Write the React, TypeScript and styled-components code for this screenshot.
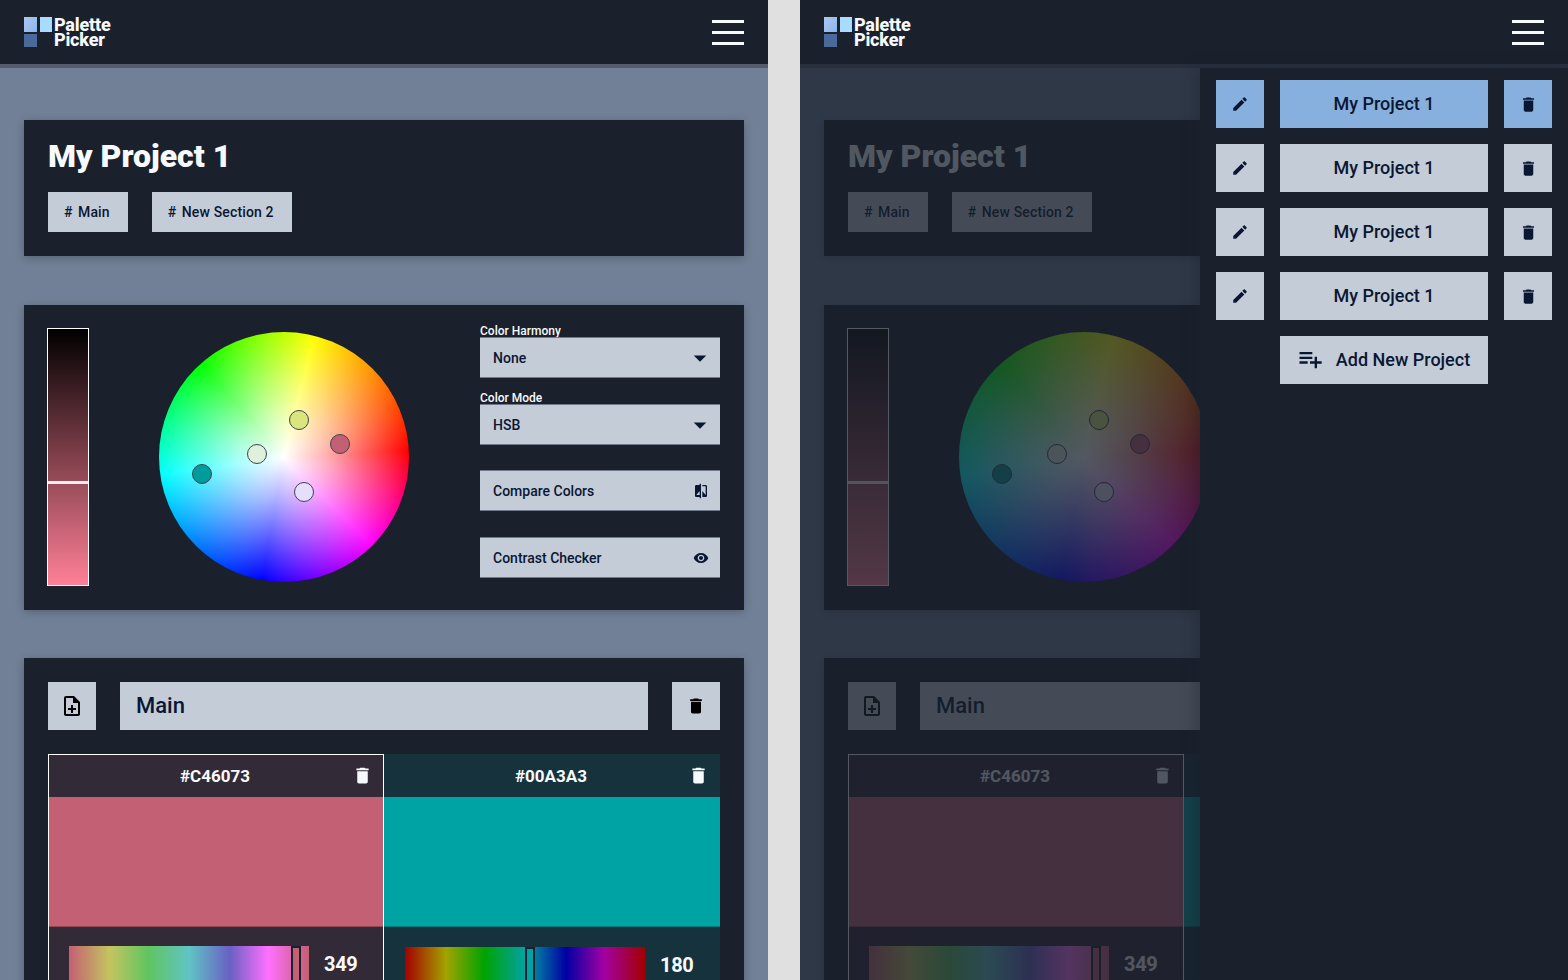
import React from 'react';
import styled, { createGlobalStyle } from 'styled-components';
import {
  MdArrowDropDown,
  MdCompare,
  MdDelete,
  MdEdit,
  MdOutlineNoteAdd,
  MdPlaylistAdd,
  MdVisibility,
} from 'react-icons/md';

const ink = '#0a1733';
const light = '#c4ccd8';
const dark = '#1a202c';
const active = '#88b0de';

const GlobalStyle = createGlobalStyle`
  html, body {
    margin: 0;
    height: 980px;
    overflow: hidden;
    background: #e0e0e0;
    font-family: Roboto, "Liberation Sans", sans-serif;
  }
  * { box-sizing: border-box; }
`;

const Page = styled.div`
  display: flex;
  justify-content: space-between;
  width: 1568px;
  height: 980px;
`;

const Screen = styled.div`
  position: relative;
  width: 768px;
  height: 980px;
  overflow: hidden;
  background: #718096;
`;

const Header = styled.header<{ $open: boolean }>`
  display: flex;
  align-items: center;
  justify-content: space-between;
  height: 68px;
  padding: 0 24px;
  background: ${dark};
  border-bottom: 4px solid ${(p) => (p.$open ? '#282f3d' : '#525c6c')};
`;

const Logo = styled.div`
  display: flex;
  align-items: center;
  gap: 2px;
  height: 32px;
`;

const LogoText = styled.div`
  color: #f7fafc;
  font-size: 18px;
  font-weight: 800;
  line-height: 15px;
  letter-spacing: -0.2px;
`;

const Burger = styled.div`
  display: flex;
  flex-direction: column;
  justify-content: space-between;
  width: 32px;
  height: 25px;
`;

const BurgerLine = styled.span`
  display: block;
  height: 3px;
  background: #f7fafc;
`;

const Main = styled.main`
  display: flex;
  flex-direction: column;
  padding: 52px 24px 0;
`;

const Card = styled.section<{ $height?: number; $gap?: number }>`
  ${(p) => (p.$height ? `height: ${p.$height}px;` : '')}
  margin-bottom: ${(p) => p.$gap ?? 0}px;
  padding: 24px;
  background: ${dark};
  box-shadow: 0 2px 8px rgba(26, 32, 44, 0.3);
`;

const Title = styled.h1`
  margin: -7px 0 0;
  color: #f7fafc;
  font-size: 32px;
  font-weight: 900;
  line-height: 38px;
`;

const Tabs = styled.div`
  display: flex;
  gap: 24px;
  margin-top: 17px;
`;

const Tab = styled.button`
  display: flex;
  align-items: center;
  height: 40px;
  padding: 0 18px 0 16px;
  border: 0;
  background: ${light};
  color: ${ink};
  font: 500 14px Roboto, sans-serif;
  letter-spacing: 0.15px;
`;

const Hash = styled.span`
  width: 14px;
  font-size: 14px;
  text-align: left;
`;

const PickerRow = styled.div`
  display: flex;
  align-items: flex-start;
`;

const Shade = styled.div`
  position: relative;
  flex: none;
  width: 42px;
  height: 258px;
  margin: -1px 0 0 -1px;
  border: 1px solid #fff;
  background: linear-gradient(#000, #ff8096);
`;

const ShadeThumb = styled.div`
  position: absolute;
  top: 152px;
  left: 0;
  right: 0;
  height: 3px;
  background: #eee;
`;

const Wheel = styled.div`
  position: relative;
  flex: none;
  width: 250px;
  height: 250px;
  margin: 3px 0 0 70px;
  border-radius: 50%;
  background:
    radial-gradient(closest-side, #fff 0%, rgba(255, 255, 255, 0.68) 35%, rgba(255, 255, 255, 0) 100%),
    conic-gradient(
      from 14deg,
      #ff0 0deg,
      #f00 73deg,
      #f0f 121deg,
      #00f 176deg,
      #0ff 248deg,
      #0f0 304deg,
      #ff0 360deg
    );
`;

const Handle = styled.div<{ $x: number; $y: number; $color: string }>`
  position: absolute;
  left: ${(p) => p.$x - 10}px;
  top: ${(p) => p.$y - 10}px;
  width: 20px;
  height: 20px;
  border-radius: 50%;
  border: 1px solid #3c4450;
  background: ${(p) => p.$color};
`;

const Controls = styled.div`
  display: flex;
  flex-direction: column;
  width: 240px;
  margin: -6px 0 0 auto;
`;

const FieldLabel = styled.label<{ $top?: number }>`
  height: 14px;
  margin-top: ${(p) => p.$top ?? 0}px;
  color: #f7fafc;
  font-size: 12px;
  font-weight: 500;
  line-height: 16px;
`;

const ControlBox = styled.div<{ $top?: number }>`
  display: flex;
  align-items: center;
  justify-content: space-between;
  height: 41px;
  margin-top: ${(p) => p.$top ?? 0}px;
  padding: 1px 11px 0 13px;
  border-top: 1px solid #6f7989;
  border-bottom: 1px solid #6f7989;
  background: ${light};
  color: ${ink};
  font-size: 14px;
  font-weight: 500;
`;

const DropIcon = styled(MdArrowDropDown)`
  margin-right: -6px;
`;

const SectionBar = styled.div`
  display: flex;
  gap: 24px;
  height: 48px;
`;

const IconButton = styled.button<{ $active?: boolean }>`
  display: flex;
  align-items: center;
  justify-content: center;
  flex: none;
  width: 48px;
  height: 48px;
  padding: 0;
  border: 0;
  background: ${(p) => (p.$active ? active : light)};
  color: ${ink};
`;

const SectionName = styled.div`
  display: flex;
  align-items: center;
  flex: 1;
  padding: 0 0 2px 16px;
  background: ${light};
  color: ${ink};
  font-size: 22px;
  font-weight: 500;
`;

const Swatches = styled.div`
  display: grid;
  grid-template-columns: 336px 336px;
  margin-top: 24px;
`;

const Swatch = styled.div<{ $selected?: boolean; $tint: string }>`
  position: relative;
  height: 300px;
  background: ${(p) => p.$tint};
  &::after {
    content: '';
    position: absolute;
    inset: 0;
    border: ${(p) => (p.$selected ? '1px solid #fff' : '0')};
    pointer-events: none;
  }
`;

const SwatchHead = styled.div`
  position: relative;
  display: flex;
  align-items: center;
  justify-content: center;
  height: 43px;
  padding: 1px 2px 0 0;
  color: #f7fafc;
  font-size: 17px;
  font-weight: 700;
`;

const SwatchTrash = styled(MdDelete)`
  position: absolute;
  right: 11px;
  top: 11px;
  color: #f7fafc;
`;

const SwatchColor = styled.div<{ $color: string }>`
  height: 130px;
  background: ${(p) => p.$color};
  border-bottom: 1px solid rgba(0, 0, 0, 0.25);
`;

const SwatchFoot = styled.div<{ $top: number }>`
  display: flex;
  gap: 15px;
  padding: ${(p) => p.$top}px 0 0 21px;
`;

const Hue = styled.div<{ $gradient: string }>`
  position: relative;
  width: 240px;
  height: 40px;
  background: ${(p) => p.$gradient};
`;

const HueThumb = styled.div<{ $x: number; $color: string }>`
  position: absolute;
  left: ${(p) => p.$x}px;
  top: 0;
  width: 10px;
  height: 40px;
  border: 2px solid ${dark};
  background: ${(p) => p.$color};
`;

const HueValue = styled.div`
  color: #f7fafc;
  font-size: 20px;
  font-weight: 700;
  line-height: 36px;
  letter-spacing: -0.3px;
`;

const Dim = styled.div`
  position: absolute;
  inset: 68px 0 0 0;
  background: rgba(26, 32, 44, 0.75);
`;

const Drawer = styled.aside`
  position: absolute;
  top: 68px;
  right: 0;
  bottom: 0;
  display: flex;
  flex-direction: column;
  gap: 16px;
  width: 368px;
  padding: 12px 16px;
  background: ${dark};
  box-shadow: -4px 0 14px rgba(26, 32, 44, 0.35);
`;

const ProjectRow = styled.div`
  display: flex;
  gap: 16px;
`;

const ProjectName = styled.button<{ $active?: boolean }>`
  display: flex;
  align-items: center;
  justify-content: center;
  gap: 12px;
  width: 208px;
  height: 48px;
  padding: 0 0 2px;
  border: 0;
  background: ${(p) => (p.$active ? active : light)};
  color: ${ink};
  font: 500 18px Roboto, sans-serif;
`;

const AddProject = styled(ProjectName)`
  margin-left: 64px;
  padding-right: 2px;
`;

const LogoMark = () => (
  <svg width="28" height="30" viewBox="0 0 28 30">
    <defs>
      <linearGradient id="logo-a" x1="0" y1="0" x2="1" y2="1">
        <stop offset="0" stopColor="#a9c9f5" />
        <stop offset="1" stopColor="#8fb4ea" />
      </linearGradient>
    </defs>
    <rect x="0" y="0" width="13" height="15" fill="url(#logo-a)" />
    <rect x="16" y="0" width="12" height="15" fill="#a8dcff" />
    <rect x="0" y="17" width="13" height="13" fill="#4a6a9c" />
  </svg>
);

const handles = [
  { x: 140, y: 88, color: '#dbe57e' },
  { x: 181, y: 112, color: '#c46073' },
  { x: 98, y: 122, color: '#dff0dd' },
  { x: 43, y: 142, color: '#009c9c' },
  { x: 145, y: 160, color: '#e5dffb' },
];

const pastelHue =
  'linear-gradient(90deg, #c46073 0%, #c4c460 17%, #60c460 33%, #60c4c4 50%, #6a60c4 67%, #ff70ff 83%, #c46073 100%)';
const tealHue =
  'linear-gradient(90deg, #a30000 0%, #a3a300 17%, #00a300 33%, #00a3a3 50%, #0000a3 67%, #a300a3 83%, #a30000 100%)';

const AppScreen = ({ open }: { open?: boolean }) => (
  <Screen>
    <Header $open={!!open}>
      <Logo>
        <LogoMark />
        <LogoText>
          Palette
          <br />
          Picker
        </LogoText>
      </Logo>
      <Burger>
        <BurgerLine />
        <BurgerLine />
        <BurgerLine />
      </Burger>
    </Header>
    <Main>
      <Card $height={136} $gap={49}>
        <Title>My Project 1</Title>
        <Tabs>
          <Tab>
            <Hash>#</Hash>Main
          </Tab>
          <Tab>
            <Hash>#</Hash>New Section 2
          </Tab>
        </Tabs>
      </Card>
      <Card $height={305} $gap={48}>
        <PickerRow>
          <Shade>
            <ShadeThumb />
          </Shade>
          <Wheel>
            {handles.map((h) => (
              <Handle key={h.color} $x={h.x} $y={h.y} $color={h.color} />
            ))}
          </Wheel>
          <Controls>
            <FieldLabel>Color Harmony</FieldLabel>
            <ControlBox>
              None
              <DropIcon size={30} />
            </ControlBox>
            <FieldLabel $top={12}>Color Mode</FieldLabel>
            <ControlBox>
              HSB
              <DropIcon size={30} />
            </ControlBox>
            <ControlBox $top={25}>
              Compare Colors
              <MdCompare size={16} />
            </ControlBox>
            <ControlBox $top={26}>
              Contrast Checker
              <MdVisibility size={16} />
            </ControlBox>
          </Controls>
        </PickerRow>
      </Card>
      <Card>
        <SectionBar>
          <IconButton>
            <MdOutlineNoteAdd size={24} color="#000" />
          </IconButton>
          <SectionName>Main</SectionName>
          <IconButton>
            <MdDelete size={20} color="#000" />
          </IconButton>
        </SectionBar>
        <Swatches>
          <Swatch $selected $tint="#332a37">
            <SwatchHead>
              #C46073
              <SwatchTrash size={21} />
            </SwatchHead>
            <SwatchColor $color="#c46073" />
            <SwatchFoot $top={19}>
              <Hue $gradient={pastelHue}>
                <HueThumb $x={222} $color="#c46073" />
              </Hue>
              <HueValue>349</HueValue>
            </SwatchFoot>
          </Swatch>
          <Swatch $tint="#16333d">
            <SwatchHead>
              #00A3A3
              <SwatchTrash size={21} />
            </SwatchHead>
            <SwatchColor $color="#00a3a3" />
            <SwatchFoot $top={20}>
              <Hue $gradient={tealHue}>
                <HueThumb $x={120} $color="#00a3a3" />
              </Hue>
              <HueValue>180</HueValue>
            </SwatchFoot>
          </Swatch>
        </Swatches>
      </Card>
    </Main>
    {open && (
      <>
        <Dim />
        <Drawer>
          {[0, 1, 2, 3].map((i) => (
            <ProjectRow key={i}>
              <IconButton $active={i === 0}>
                <MdEdit size={18} />
              </IconButton>
              <ProjectName $active={i === 0}>My Project 1</ProjectName>
              <IconButton $active={i === 0}>
                <MdDelete size={19} />
              </IconButton>
            </ProjectRow>
          ))}
          <AddProject>
            <MdPlaylistAdd size={28} />
            Add New Project
          </AddProject>
        </Drawer>
      </>
    )}
  </Screen>
);

const App = () => (
  <Page>
    <GlobalStyle />
    <AppScreen />
    <AppScreen open />
  </Page>
);

export default App;
